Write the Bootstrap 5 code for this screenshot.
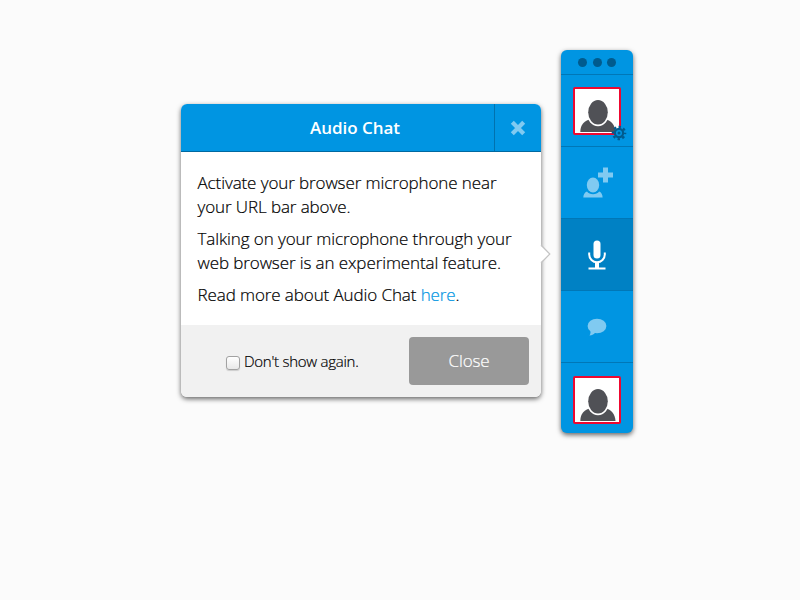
<!DOCTYPE html>
<html lang="en">
<head>
<meta charset="utf-8">
<meta name="viewport" content="width=device-width, initial-scale=1">
<title>Audio Chat</title>
<link href="https://cdn.jsdelivr.net/npm/bootstrap@5.3.0/dist/css/bootstrap.min.css" rel="stylesheet">
<style>
body { background: #fbfbfb; font-family: "Open Sans", sans-serif; font-size: 17px; line-height: 24px; color: #000; font-weight: 300; }
.stage { width: 800px; height: 600px; padding: 50px 0 0 181px; gap: 20px; }
.chat-dialog { width: 360px; height: 293px; margin-top: 54px; border-radius: 6px; box-shadow: 0 2px 5px rgba(0,0,0,.6); background: #fff; }
.chat-head { height: 48px; background: #0095e2; border-bottom: 1px solid #0069a1; border-radius: 6px 6px 0 0; }
.chat-title { color: #fff; font-size: 17px; font-weight: 600; padding-left: 35px; letter-spacing: -.04px; }
.chat-x { width: 47px; border: 0; border-left: 1px solid #0072af; background: transparent; }
.chat-body { height: 173px; padding: 19px 16px 0 16.5px; white-space: nowrap; letter-spacing: -.1px; -webkit-text-stroke: .2px; }
.chat-body p { margin: 0 0 8px; }
.chat-body a { color: #0095e2; }
.chat-foot { height: 72px; background: #f1f1f1; border-radius: 0 0 6px 6px; padding: 0 12px 0 45px; }
.chat-foot label { font-size: 15px; letter-spacing: -.26px; -webkit-text-stroke: .2px; }
.tick { appearance: none; width: 14px; height: 14px; margin: 4px 4px 0 0; border: 1px solid #a2a2a2; border-radius: 3px; background: linear-gradient(#fff, #e8e8e8); box-shadow: 0 1px 1px rgba(0,0,0,.15); }
.close-btn { width: 120px; height: 48px; background: #999; color: #fff; border: 0; border-radius: 4px; font-size: 17px; font-weight: 300; letter-spacing: -.1px; -webkit-text-stroke: .2px; }
.pointer { right: -10px; top: 140px; }
.dock { width: 72px; height: 383px; background: #0095e2; border-radius: 6px; box-shadow: 0 2px 5px rgba(0,0,0,.6); }
.dock-cell { height: 72px; border-bottom: 1px solid #0077b7; }
.dock-cell.grip { height: 25px; gap: 5.5px; }
.dock-cell.grip i { width: 9px; height: 9px; border-radius: 50%; background: #005b8e; }
.dock-cell.current { background: #0081c4; }
.dock-cell:last-child { height: 70px; border: 0; padding-top: 3px; }
.face { width: 48px; height: 48px; border: 2px solid #ee0830; border-radius: 2px; background: #fff; }
.gear { right: -8px; bottom: -8px; }
</style>
<script src="https://cdn.jsdelivr.net/npm/bootstrap@5.3.0/dist/js/bootstrap.bundle.min.js"></script>
</head>
<body class="overflow-hidden">
<svg class="d-none">
  <symbol id="person" viewBox="0 0 44 44">
    <path d="M5.300 43C5.300 36 9 31.500 16 30H30C36.500 31.500 40 36 40.500 43Z" fill="#505156"/>
    <ellipse cx="23" cy="23.800" rx="11.200" ry="13.500" fill="#fff"/>
    <ellipse cx="23" cy="23.300" rx="9.800" ry="12.200" fill="#505156"/>
  </symbol>
</svg>
<main class="stage d-flex align-items-start">
  <section class="chat-dialog position-relative d-flex flex-column">
    <header class="chat-head d-flex">
      <div class="chat-title flex-grow-1 d-flex align-items-center justify-content-center">Audio Chat</div>
      <button class="chat-x p-0 d-flex align-items-center justify-content-center" aria-label="Close">
        <svg width="16" height="16" viewBox="0 0 16 16"><path d="M2.300 2.300L13.700 13.700M13.700 2.300L2.300 13.700" stroke="#80caf1" stroke-width="4.200"/></svg>
      </button>
    </header>
    <div class="chat-body">
      <p>Activate your browser microphone near<br>your URL bar above.</p>
      <p>Talking on your microphone through your<br>web browser is an experimental feature.</p>
      <p>Read more about Audio Chat <a href="#" class="text-decoration-none">here</a>.</p>
    </div>
    <footer class="chat-foot d-flex align-items-center justify-content-between">
      <label class="d-flex align-items-center"><input type="checkbox" class="tick">Don't show again.</label>
      <button class="close-btn">Close</button>
    </footer>
    <svg class="pointer position-absolute" width="11" height="20" viewBox="0 0 11 20"><path d="M0 1L9.500 10L0 19Z" fill="#fff"/><path d="M1 1L9.800 10L1 19" fill="none" stroke="#c4c4c4" stroke-width="1.200"/></svg>
  </section>

  <nav class="dock d-flex flex-column overflow-hidden">
    <div class="dock-cell grip d-flex align-items-center justify-content-center"><i></i><i></i><i></i></div>
    <div class="dock-cell d-flex align-items-center justify-content-center">
      <div class="face position-relative">
        <svg class="d-block" width="44" height="44"><use href="#person"/></svg>
        <svg class="gear position-absolute" width="16" height="16" viewBox="-8 -8 16 16">
          <circle r="6.100" fill="none" stroke="#005b8e" stroke-width="2.400" stroke-dasharray="2.396 2.396" stroke-dashoffset="1.198"/>
          <circle r="4.100" fill="#0095e2" stroke="#005b8e" stroke-width="2.200"/>
          <circle r="1.500" fill="#005b8e"/>
        </svg>
      </div>
    </div>
    <div class="dock-cell d-flex align-items-center justify-content-center">
      <svg width="32" height="32" viewBox="-1 .500 32 32" fill="#80caf1">
        <path d="M21 1h5v5h5v5h-5v5h-5v-5h-5V6h5z"/>
        <ellipse cx="11" cy="18.500" rx="6.200" ry="7.400"/>
        <path d="M1.300 31C1.300 28 2.800 25.700 5 25C7.300 28.500 14.800 28.500 17.100 25C19.300 25.700 20.600 28 20.600 31Z"/>
      </svg>
    </div>
    <div class="dock-cell current d-flex align-items-center justify-content-center">
      <svg width="18" height="30" viewBox="0 0 18 30">
        <rect x="5.500" y="0.500" width="7" height="18" rx="3.500" fill="#fff"/>
        <path d="M1.200 12.500V14.500A7.800 7.800 0 0 0 16.800 14.500V12.500M.5 28.500H17.500" fill="none" stroke="#fff" stroke-width="2"/>
        <path d="M9 22V28" stroke="#fff" stroke-width="4"/>
      </svg>
    </div>
    <div class="dock-cell d-flex align-items-center justify-content-center">
      <svg width="20" height="18" viewBox="0 0 20 18" fill="#80caf1"><ellipse cx="10" cy="8" rx="9.400" ry="7.300"/><path d="M3 11C4 14 3.500 16 2.500 17.500C5 17.500 7.500 16 8.500 14Z"/></svg>
    </div>
    <div class="dock-cell d-flex align-items-center justify-content-center">
      <div class="face"><svg class="d-block" width="44" height="44"><use href="#person"/></svg></div>
    </div>
  </nav>
</main>
</body>
</html>
